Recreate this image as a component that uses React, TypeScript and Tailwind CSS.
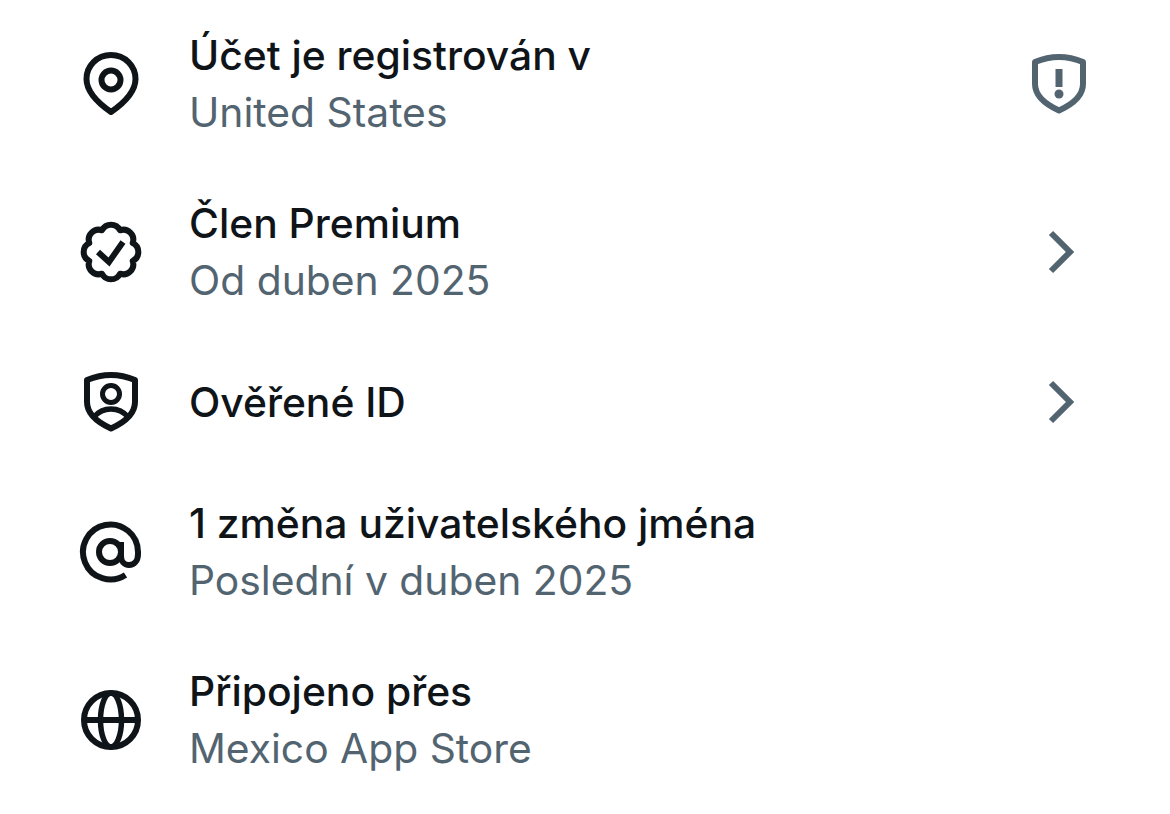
import React from "react";

// scalloped badge outline, 8 lobes
function badgePath() {
  const pts = Array.from({ length: 8 }, (_, i) => {
    const a = ((22.5 + i * 45) * Math.PI) / 180;
    return [32 + 23.5 * Math.cos(a), 32 + 23.5 * Math.sin(a)];
  });
  return (
    `M${pts[0][0].toFixed(2)} ${pts[0][1].toFixed(2)} ` +
    pts
      .slice(1)
      .concat([pts[0]])
      .map((p) => `A10 10 0 0 1 ${p[0].toFixed(2)} ${p[1].toFixed(2)}`)
      .join(" ") +
    "Z"
  );
}

function Icon({ children, muted }: { children: React.ReactNode; muted?: boolean }) {
  return (
    <svg
      viewBox="0 0 64 64"
      fill="none"
      stroke="currentColor"
      strokeWidth={6}
      className={`h-16 w-16 shrink-0 ${muted ? "text-[#536471]" : "text-[#0f1419]"}`}
    >
      {children}
    </svg>
  );
}

const shield = "M8 10 Q20 5 32 5 Q44 5 56 10 V32 C56 44 44 53 32 58.5 C20 53 8 44 8 32 Z";

const PinIcon = () => (
  <Icon>
    <path d="M32 3 C46 3 56.5 14 56.5 27 C56.5 40 45 51 32 60 C19 51 7.5 40 7.5 27 C7.5 14 18 3 32 3 Z" strokeLinejoin="round" />
    <circle cx="32" cy="28" r="9.5" />
  </Icon>
);

const BadgeIcon = () => (
  <Icon>
    <path d={badgePath()} strokeLinejoin="round" />
    <path d="M19 32 L30 42 L44 22" />
  </Icon>
);

const IdIcon = () => (
  <Icon>
    <path d={shield} strokeLinejoin="round" />
    <circle cx="32" cy="24" r="8.5" strokeWidth={5} />
    <path d="M15 47 C20 41 26 39 32 39 C38 39 44 41 49 47" strokeWidth={5.5} />
  </Icon>
);

const AtIcon = () => (
  <Icon>
    <path d="M46.5 55 A27.5 27.5 0 1 1 59 32 V34 C59 41 55 45 50 45 C45 45 42 41 42 36 V22" />
    <circle cx="31" cy="32" r="11" />
  </Icon>
);

const GlobeIcon = () => (
  <Icon>
    <circle cx="32" cy="32" r="27" />
    <ellipse cx="32" cy="32" rx="10.5" ry="27" strokeWidth={5.5} />
    <path d="M5 32 H59" />
  </Icon>
);

const AlertShield = () => (
  <Icon muted>
    <path d={shield} strokeLinejoin="round" />
    <rect x="28.5" y="17" width="7" height="18" fill="currentColor" stroke="none" />
    <circle cx="32" cy="42" r="4.5" fill="currentColor" stroke="none" />
  </Icon>
);

const Chevron = () => (
  <Icon muted>
    <path d="M24 13 L43 32 L24 51" />
  </Icon>
);

const rows = [
  { icon: <PinIcon />, title: "Účet je registrován v", sub: "United States", right: <AlertShield /> },
  { icon: <BadgeIcon />, title: "Člen Premium", sub: "Od duben 2025", right: <Chevron /> },
  { icon: <IdIcon />, title: "Ověřené ID", right: <Chevron /> },
  { icon: <AtIcon />, title: "1 změna uživatelského jména", sub: "Poslední v duben 2025" },
  { icon: <GlobeIcon />, title: "Připojeno přes", sub: "Mexico App Store" },
];

export default function App() {
  return (
    <div className="h-[814px] w-[1170px] overflow-hidden bg-white font-['Inter',sans-serif]">
      {rows.map((row) => (
        <div
          key={row.title}
          className={`flex items-center gap-[46px] pl-[79px] pr-[79px] ${row.sub ? "py-[26px]" : "py-[34px]"}`}
        >
          {row.icon}
          <div className="min-w-0 flex-1">
            <div className="text-[40.8px] leading-[58px] font-medium text-[#0f1419]">{row.title}</div>
            {row.sub && <div className="-mt-px pb-px text-[40.8px] leading-[58px] text-[#536471]">{row.sub}</div>}
          </div>
          {row.right}
        </div>
      ))}
    </div>
  );
}
